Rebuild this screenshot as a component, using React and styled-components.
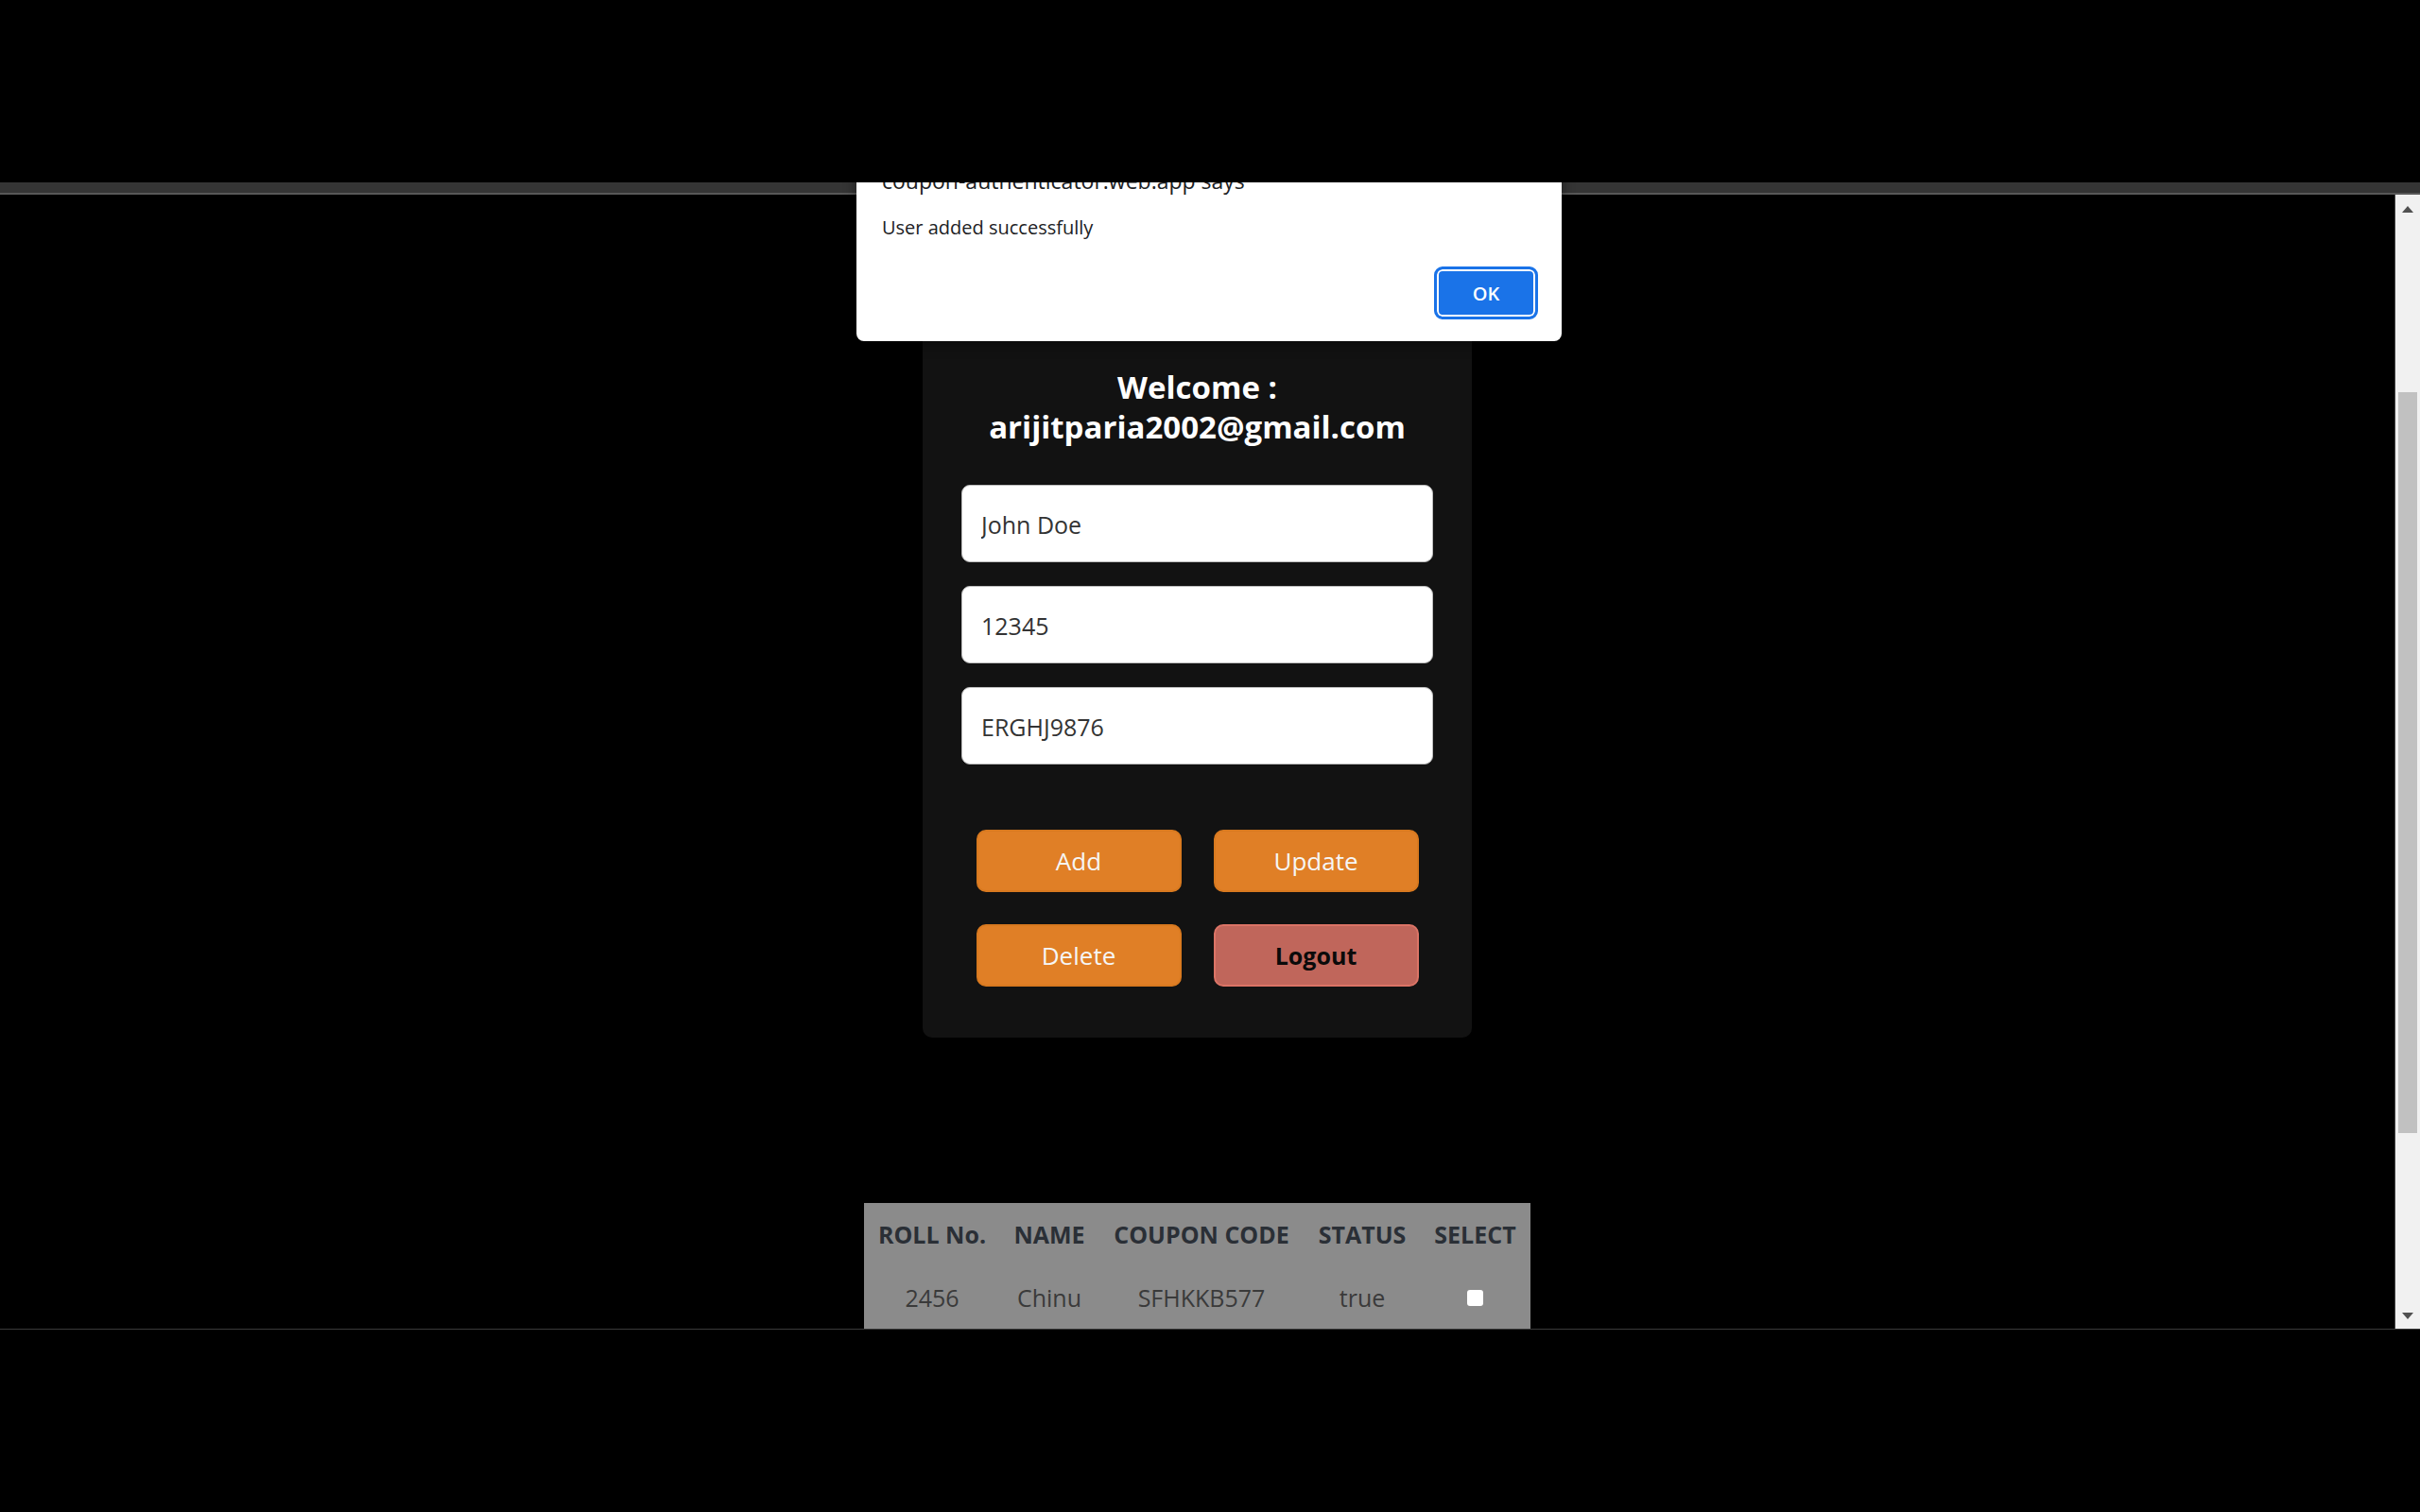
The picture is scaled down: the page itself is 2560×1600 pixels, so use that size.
import React from "react";
import styled, { createGlobalStyle } from "styled-components";

const GlobalStyle = createGlobalStyle`
  html, body {
    margin: 0;
    padding: 0;
    background: #000;
    font-family: "Open Sans", "Noto Sans", sans-serif;
  }
  * { box-sizing: border-box; }
`;

const Screen = styled.div`
  width: 2560px;
  height: 1600px;
  display: flex;
  flex-direction: column;
  background: #000;
  overflow: hidden;
`;

const TopBlack = styled.div`
  height: 193px;
  flex-shrink: 0;
  background: #000;
  position: relative;
  z-index: 3;
`;

const Window = styled.div`
  position: relative;
  flex-shrink: 0;
`;

const TabStrip = styled.div`
  height: 13px;
  background: #353535;
  border-bottom: 2px solid #585858;
`;

const Viewport = styled.div`
  height: 1200px;
  display: flex;
`;

const Content = styled.main`
  flex: 1;
  overflow: hidden;
  background: #000;
  padding-top: 129px;
  display: flex;
  flex-direction: column;
  align-items: center;
`;

const Scrollbar = styled.div`
  width: 27px;
  flex-shrink: 0;
  background: #f1f1f1;
  border-left: 1px solid #444;
  display: flex;
  flex-direction: column;
  align-items: center;
  justify-content: space-between;
  padding: 12px 0 10px;
`;

const ThumbTrack = styled.div`
  flex: 1;
  width: 100%;
  display: flex;
  justify-content: center;
  padding-top: 190px;
`;

const Thumb = styled.div`
  width: 20px;
  height: 784px;
  background: #c1c1c1;
`;

const BottomLine = styled.div`
  height: 1px;
  background: #3a3a3a;
  flex-shrink: 0;
`;

const BottomBlack = styled.div`
  flex: 1;
  background: #000;
`;

const Dialog = styled.div`
  position: absolute;
  top: -20px;
  left: 906px;
  width: 746px;
  height: 188px;
  background: #fff;
  border-radius: 8px;
  box-shadow: 0 4px 14px rgba(0, 0, 0, 0.45);
  z-index: 2;
  padding: 5px 25px 23px 27px;
  display: flex;
  flex-direction: column;
`;

const DialogTitle = styled.div`
  font-size: 23px;
  line-height: 27px;
  color: #202124;
`;

const DialogMessage = styled.div`
  margin-top: 23px;
  font-size: 20px;
  line-height: 26px;
  color: #202124;
`;

const DialogActions = styled.div`
  margin-top: auto;
  display: flex;
  justify-content: flex-end;
`;

const OkButton = styled.button`
  width: 110px;
  height: 56px;
  background: #1a73e8;
  border: 3px solid #1a73e8;
  border-radius: 9px;
  box-shadow: inset 0 0 0 2px #fff;
  color: #fff;
  font-family: "Open Sans", sans-serif;
  font-weight: 600;
  font-size: 20px;
`;

const Card = styled.section`
  width: 581px;
  background: #121212;
  border-radius: 10px;
  padding: 54px 41px 54px;
  display: flex;
  flex-direction: column;
`;

const Heading = styled.h2`
  margin: 0 0 40px;
  text-align: center;
  color: #fff;
  font-size: 33px;
  line-height: 42px;
  font-weight: 700;
`;

const Fields = styled.div`
  display: flex;
  flex-direction: column;
  gap: 25px;
`;

const Input = styled.input`
  height: 82px;
  width: 100%;
  border: 1px solid #bdbdbd;
  border-radius: 9px;
  background: #fff;
  padding: 2px 20px 0;
  font-family: "Open Sans", sans-serif;
  font-size: 25px;
  color: #333;
  outline: none;
`;

const Actions = styled.div`
  margin-top: 69px;
  align-self: center;
  display: grid;
  grid-template-columns: 217px 217px;
  gap: 34px;
`;

const ActionButton = styled.button`
  height: 66px;
  border-radius: 10px;
  border: 2px solid ${(p) => (p.$danger ? "#dc7466" : "#d8791f")};
  background: ${(p) => (p.$danger ? "#c0665b" : "#e07f26")};
  color: ${(p) => (p.$danger ? "#0a0a0a" : "#f6f6f6")};
  font-family: "Open Sans", sans-serif;
  font-size: ${(p) => (p.$danger ? "25px" : "26px")};
  font-weight: ${(p) => (p.$danger ? 700 : 400)};
`;

const Table = styled.table`
  margin-top: 175px;
  background: #8b8b8b;
  border-collapse: collapse;
  table-layout: fixed;
  width: 705px;
  flex-shrink: 0;
`;

const Th = styled.th`
  height: 66px;
  font-size: 25px;
  font-weight: 700;
  color: #2a2f36;
  text-align: center;
  padding: 0;
  white-space: nowrap;
`;

const Td = styled.td`
  height: 68px;
  font-size: 25px;
  color: #3a3a3a;
  text-align: center;
  padding: 0;
`;

const CheckBox = styled.span`
  display: inline-block;
  width: 17px;
  height: 17px;
  background: #fff;
  border-radius: 3px;
  vertical-align: middle;
  position: relative;
  top: -3px;
`;

const Arrow = ({ up }) => (
  <svg width="12" height="7" viewBox="0 0 12 7">
    <path d={up ? "M0 7 L6 0 L12 7 Z" : "M0 0 L12 0 L6 7 Z"} fill="#505050" />
  </svg>
);

const columns = [144, 104, 218, 122, 117];

const App = () => {
  return (
    <>
      <GlobalStyle />
      <Screen>
        <TopBlack />
        <Window>
          <TabStrip />
          <Dialog>
            <DialogTitle>coupon-authenticator.web.app says</DialogTitle>
            <DialogMessage>User added successfully</DialogMessage>
            <DialogActions>
              <OkButton>OK</OkButton>
            </DialogActions>
          </Dialog>
          <Viewport>
            <Content>
              <Card>
                <Heading>
                  Welcome :
                  <br />
                  arijitparia2002@gmail.com
                </Heading>
                <Fields>
                  <Input defaultValue="John Doe" />
                  <Input defaultValue="12345" />
                  <Input defaultValue="ERGHJ9876" />
                </Fields>
                <Actions>
                  <ActionButton>Add</ActionButton>
                  <ActionButton>Update</ActionButton>
                  <ActionButton>Delete</ActionButton>
                  <ActionButton $danger>Logout</ActionButton>
                </Actions>
              </Card>
              <Table>
                <colgroup>
                  {columns.map((w, i) => (
                    <col key={i} style={{ width: w }} />
                  ))}
                </colgroup>
                <thead>
                  <tr>
                    <Th>ROLL No.</Th>
                    <Th>NAME</Th>
                    <Th>COUPON CODE</Th>
                    <Th>STATUS</Th>
                    <Th>SELECT</Th>
                  </tr>
                </thead>
                <tbody>
                  <tr>
                    <Td>2456</Td>
                    <Td>Chinu</Td>
                    <Td>SFHKKB577</Td>
                    <Td>true</Td>
                    <Td>
                      <CheckBox />
                    </Td>
                  </tr>
                </tbody>
              </Table>
            </Content>
            <Scrollbar>
              <Arrow up />
              <ThumbTrack>
                <Thumb />
              </ThumbTrack>
              <Arrow />
            </Scrollbar>
          </Viewport>
        </Window>
        <BottomLine />
        <BottomBlack />
      </Screen>
    </>
  );
};

export default App;
